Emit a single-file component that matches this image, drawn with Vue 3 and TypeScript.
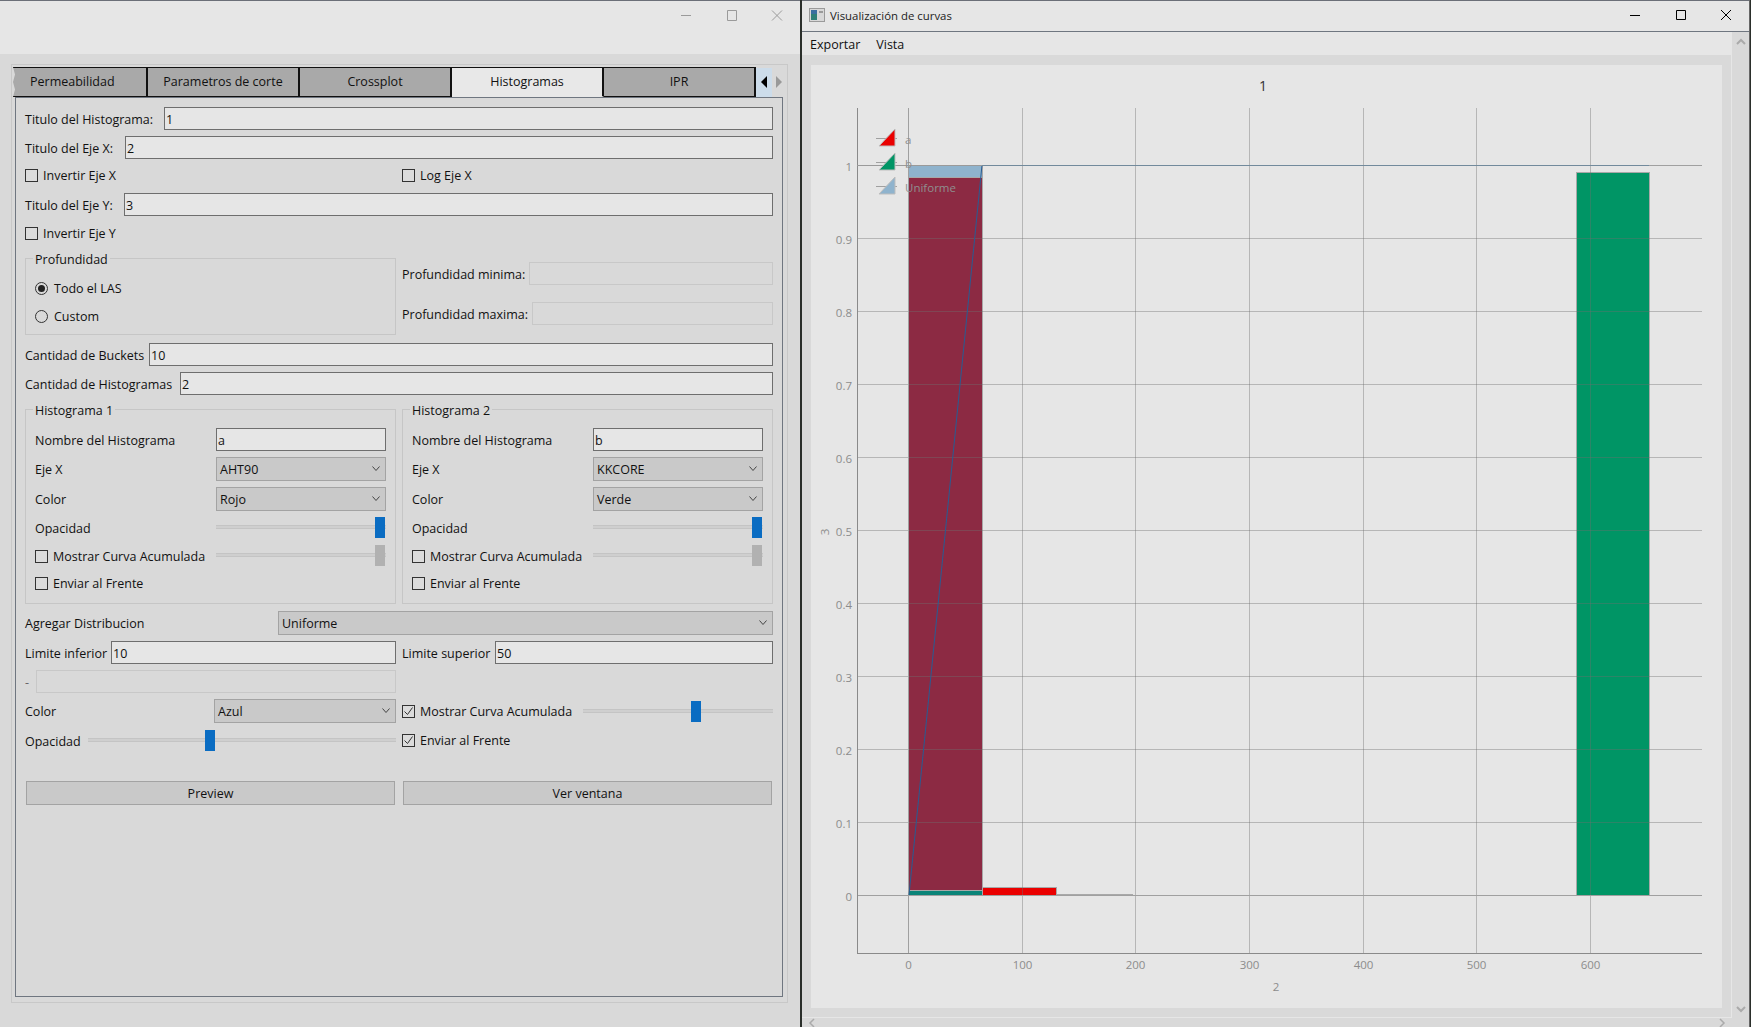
<template>
  <div class="desktop">
    <!-- ventana de configuracion -->
    <section class="win win-left">
      <header class="titlebar titlebar-main">
        <div class="controls inactive">
          <span class="ctl"><svg width="12" height="12" viewBox="0 0 12 12"><path d="M1 6.5h10" /></svg></span>
          <span class="ctl"><svg width="12" height="12" viewBox="0 0 12 12"><path d="M1.5 1.5h9v10h-9z" /></svg></span>
          <span class="ctl"><svg width="12" height="12" viewBox="0 0 12 12"><path d="M1 1.5l10 10M11 1.5L1 11.5" /></svg></span>
        </div>
      </header>

      <div class="tabs-frame">
        <div class="tabbar">
          <div
            v-for="(tab, i) in tabs"
            :key="tab"
            class="tab"
            :class="{ active: tab === 'Histogramas', torn: i === 0 }"
          >{{ tab }}</div>
          <div class="tab-scroll">
            <span class="arrow-box"><i class="tri-left"></i></span>
            <i class="tri-right"></i>
          </div>
        </div>

        <div class="pane">
          <div class="row"><label class="w139">Titulo del Histograma:</label><input class="field" value="1" readonly /></div>
          <div class="row"><label class="w100">Titulo del Eje X:</label><input class="field" value="2" readonly /></div>
          <div class="two-col row-check">
            <div class="check"><i class="box"></i>Invertir Eje X</div>
            <div class="check"><i class="box"></i>Log Eje X</div>
          </div>
          <div class="row"><label class="w99">Titulo del Eje Y:</label><input class="field" value="3" readonly /></div>
          <div class="row"><div class="check"><i class="box"></i>Invertir Eje Y</div></div>

          <div class="two-col">
            <div class="group depth">
              <div class="frame depth-frame">
                <span class="legend">Profundidad</span>
                <div class="radio"><i class="dot on"></i>Todo el LAS</div>
                <div class="radio"><i class="dot"></i>Custom</div>
              </div>
            </div>
            <div class="depth-limits">
              <div class="row"><label class="w127">Profundidad minima:</label><input class="field off" readonly /></div>
              <div class="row"><label class="w130">Profundidad maxima:</label><input class="field off" readonly /></div>
            </div>
          </div>

          <div class="row buckets"><label class="w124">Cantidad de Buckets</label><input class="field" value="10" readonly /></div>
          <div class="row"><label class="w155">Cantidad de Histogramas</label><input class="field" value="2" readonly /></div>

          <div class="two-col">
            <div v-for="h in histograms" :key="h.title" class="group hist">
              <div class="frame hist-frame">
                <span class="legend">{{ h.title }}</span>
                <label>Nombre del Histograma</label>
                <input class="field" :value="h.name" readonly />
                <label>Eje X</label>
                <div class="combo">{{ h.axis }}<svg class="chev" width="10" height="6" viewBox="0 0 10 6"><path d="M1.5 .5l3.5 4 3.5-4" /></svg></div>
                <label>Color</label>
                <div class="combo">{{ h.color }}<svg class="chev" width="10" height="6" viewBox="0 0 10 6"><path d="M1.5 .5l3.5 4 3.5-4" /></svg></div>
                <label>Opacidad</label>
                <div class="slider"><i class="groove"></i><i class="handle" style="left: 159px"></i></div>
                <div class="check"><i class="box"></i>Mostrar Curva Acumulada</div>
                <div class="slider"><i class="groove"></i><i class="handle off" style="left: 159px"></i></div>
                <div class="check"><i class="box"></i>Enviar al Frente</div>
              </div>
            </div>
          </div>

          <div class="row dist">
            <label class="w253">Agregar Distribucion</label>
            <div class="combo grow">Uniforme<svg class="chev" width="10" height="6" viewBox="0 0 10 6"><path d="M1.5 .5l3.5 4 3.5-4" /></svg></div>
          </div>
          <div class="two-col">
            <div class="row"><label class="w86">Limite inferior</label><input class="field" value="10" readonly /></div>
            <div class="row"><label class="w93">Limite superior</label><input class="field" value="50" readonly /></div>
          </div>
          <div class="two-col">
            <div class="row"><label class="w11 dash">-</label><input class="field off" readonly /></div>
          </div>
          <div class="two-col row-24">
            <div class="row row-24">
              <label class="w189">Color</label>
              <div class="combo grow">Azul<svg class="chev" width="10" height="6" viewBox="0 0 10 6"><path d="M1.5 .5l3.5 4 3.5-4" /></svg></div>
            </div>
            <div class="row row-24">
              <div class="check w181"><i class="box"><svg width="11" height="11" viewBox="0 0 11 11"><path d="M1.5 5.5l3 3 5-7" /></svg></i>Mostrar Curva Acumulada</div>
              <div class="slider grow"><i class="groove"></i><i class="handle" style="left: 108px"></i></div>
            </div>
          </div>
          <div class="two-col">
            <div class="row">
              <label class="w63">Opacidad</label>
              <div class="slider grow"><i class="groove"></i><i class="handle" style="left: 117px"></i></div>
            </div>
            <div class="row">
              <div class="check"><i class="box"><svg width="11" height="11" viewBox="0 0 11 11"><path d="M1.5 5.5l3 3 5-7" /></svg></i>Enviar al Frente</div>
            </div>
          </div>
          <div class="actions">
            <div class="btn">Preview</div>
            <div class="btn">Ver ventana</div>
          </div>
        </div>
      </div>
    </section>

    <!-- ventana del grafico -->
    <section class="win win-right">
      <header class="titlebar titlebar-plot">
        <svg class="app-icon" width="16" height="14" viewBox="0 0 16 14">
          <rect x=".5" y=".5" width="15" height="13" fill="#d8d8d8" stroke="#9a9a9a" />
          <rect x="2" y="2" width="6" height="10" fill="#2f7f78" />
          <rect x="2" y="2" width="6" height="4" fill="#3a6fa0" />
          <rect x="10" y="3" width="4" height="2" fill="#9a9a9a" />
        </svg>
        <span class="win-title">Visualización de curvas</span>
        <div class="controls">
          <span class="ctl"><svg width="12" height="12" viewBox="0 0 12 12"><path d="M1 6.5h10" /></svg></span>
          <span class="ctl"><svg width="12" height="12" viewBox="0 0 12 12"><path d="M1.5 1.5h9v9h-9z" /></svg></span>
          <span class="ctl"><svg width="12" height="12" viewBox="0 0 12 12"><path d="M1 1l10 10M11 1L1 11" /></svg></span>
        </div>
      </header>
      <div class="plot-body">
        <div class="plot-main">
          <nav class="menubar"><span>Exportar</span><span>Vista</span></nav>
          <div class="plot-wrap">
            <svg class="chart" width="911" height="943" viewBox="0 0 911 943">
              <!-- barras -->
              <g stroke="#a8a8a8">
                <rect :x="px(0)" y="100.5" width="74" height="12" fill="#8fb3cd" />
                <rect :x="px(0)" y="112.5" width="74" height="713" fill="#8c2a43" />
                <rect :x="px(0)" y="825.5" width="74" height="5" fill="#0a8478" />
                <rect x="171.5" y="822.5" width="74" height="8" fill="#ea0000" />
                <rect x="245.5" y="829.5" width="76" height="1" fill="#a8a8a8" />
                <rect x="765.5" y="107.5" width="73" height="723" fill="#009565" />
              </g>
              <!-- grilla -->
              <g class="grid">
                <line v-for="t in yGrid" :key="'h' + t" x1="46" :y1="py(t)" x2="891" :y2="py(t)" />
                <line v-for="t in xGrid" :key="'v' + t" :x1="px(t)" y1="43" :x2="px(t)" y2="888" />
              </g>
              <line class="axis" :x1="px(0)" y1="43" :x2="px(0)" y2="888" />
              <line class="axis" x1="46" y1="830.5" x2="891" y2="830.5" />
              <line class="axis strong" x1="46.5" y1="43" x2="46.5" y2="888" />
              <line class="axis strong" x1="46" y1="888.5" x2="891" y2="888.5" />
              <!-- uniforme acumulada -->
              <line x1="98" y1="830" x2="171" y2="100" stroke="#285c92" stroke-width="1" />
              <line x1="171" y1="100.5" x2="838" y2="100.5" stroke="#728a9c" stroke-width="1" />
              <line x1="838" y1="100.5" x2="891" y2="100.5" stroke="#a0a0a0" stroke-width="1" />
              <line x1="46" y1="100.5" x2="171" y2="100.5" stroke="#9a9a9a" stroke-width="1" />

              <text class="chart-title" x="452" y="26" text-anchor="middle">1</text>
              <text class="tick" x="465" y="926" text-anchor="middle">2</text>
              <text class="tick" transform="translate(18 467) rotate(-90)" text-anchor="middle">3</text>
              <text v-for="t in yTicks" :key="'yl' + t" class="tick" x="41" :y="py(t) + 5" text-anchor="end">{{ t }}</text>
              <text v-for="t in xTicks" :key="'xl' + t" class="tick" :x="px(t)" y="904" text-anchor="middle">{{ t }}</text>

              <g v-for="l in legendItems" :key="l.name">
                <line x1="65" :y1="l.y + 9.5" x2="86" :y2="l.y + 9.5" stroke="#a0a0a0" />
                <polygon :points="`84,${l.y} 84,${l.y + 17} 68,${l.y + 17}`" :fill="l.color" stroke="#bdbdbd" />
                <text class="legend-text" x="94" :y="l.y + 15">{{ l.name }}</text>
              </g>
            </svg>
          </div>
          <div class="hbar">
            <svg width="8" height="9" viewBox="0 0 8 9"><path d="M6 1L2 5l4 4" /></svg>
            <svg width="8" height="9" viewBox="0 0 8 9"><path d="M2 1l4 4-4 4" /></svg>
          </div>
        </div>
        <div class="vbar">
          <svg width="10" height="7" viewBox="0 0 10 7"><path d="M1 6l4-4 4 4" /></svg>
          <svg width="10" height="7" viewBox="0 0 10 7"><path d="M1 1l4 4 4-4" /></svg>
        </div>
      </div>
    </section>
  </div>
</template>

<script setup lang="ts">
const tabs = ['Permeabilidad', 'Parametros de corte', 'Crossplot', 'Histogramas', 'IPR']

const histograms = [
  { title: 'Histograma 1', name: 'a', axis: 'AHT90', color: 'Rojo' },
  { title: 'Histograma 2', name: 'b', axis: 'KKCORE', color: 'Verde' }
]

const yTicks = [0, 0.1, 0.2, 0.3, 0.4, 0.5, 0.6, 0.7, 0.8, 0.9, 1]
const xTicks = [0, 100, 200, 300, 400, 500, 600]
const yGrid = yTicks.slice(1, -1)
const xGrid = xTicks.slice(1)

const legendItems = [
  { name: 'a', y: 64, color: '#ea0000' },
  { name: 'b', y: 88, color: '#009565' },
  { name: 'Uniforme', y: 112, color: '#8fb3cd' }
]

// escala del grafico en pixeles
const px = (v: number) => Math.round(97 + v * 1.1367) + 0.5
const py = (v: number) => Math.round(830 - v * 730) + 0.5
</script>

<style>
html,
body {
  margin: 0;
  background: #2b2f2b;
}
</style>

<style scoped>
.desktop {
  display: flex;
  width: 1751px;
  height: 1027px;
  overflow: hidden;
  font-family: "Open Sans", sans-serif;
  font-size: 12.5px;
  color: #111;
}

.win {
  display: flex;
  flex-direction: column;
  height: 1027px;
  background: #d9d9d9;
}

.win-left {
  width: 800px;
}

.win-right {
  width: 947px;
  margin-left: 2px;
  border-right: 1px solid #666;
}

/* Title bars */
.titlebar {
  display: flex;
  align-items: flex-start;
  background: #e6e6e6;
  border-top: 1px solid #6b6f78;
  box-sizing: border-box;
}

.titlebar-main {
  height: 54px;
  justify-content: flex-end;
}

.titlebar-plot {
  height: 32px;
  align-items: center;
  border-bottom: 1px solid #6f7680;
  padding: 0 0 2px 7px;
}

.app-icon {
  flex: none;
}

.win-title {
  margin-left: 5px;
  flex: 1;
  font-size: 11.4px;
  color: #222;
}

.controls {
  display: flex;
  fill: none;
  stroke: #000;
}

.controls.inactive {
  stroke: #9a9a9a;
}

.ctl {
  display: flex;
  align-items: center;
  justify-content: center;
  width: 45.5px;
  height: 27px;
}

.titlebar-plot .ctl {
  height: 29px;
}

/* Tabs */
.tabs-frame {
  display: flex;
  flex-direction: column;
  height: 939px;
  margin: 10px 12px 0 11px;
  padding: 2px 4px 5px 3px;
  border: 1px solid #c8c8c8;
  box-sizing: border-box;
}

.tabbar {
  display: flex;
  height: 30px;
  margin-left: -2px;
  position: relative;
  z-index: 1;
}

.tab {
  flex: none;
  display: flex;
  align-items: center;
  justify-content: center;
  width: 152px;
  box-sizing: border-box;
  padding-bottom: 1px;
  background: #a9a9a9;
  border: solid #111;
  border-width: 1px 2px 1px 0;
}

.tab.torn {
  width: 135px;
  justify-content: flex-start;
  padding-left: 17px;
  clip-path: polygon(0 0, 100% 0, 100% 100%, 0 100%, 2px 75%, 0 50%, 2px 25%);
}

.tab.active {
  background: #e8e8e8;
  border-bottom-color: #e8e8e8;
}

.tab-scroll {
  flex: none;
  display: flex;
  align-items: center;
  gap: 4px;
}

.arrow-box {
  display: flex;
  align-items: center;
  justify-content: center;
  width: 16px;
  height: 29px;
  background: #ccdcea;
}

.tri-left {
  border: solid transparent;
  border-width: 6px 6px 6px 0;
  border-right-color: #000;
}

.tri-right {
  margin-top: -1px;
  border: solid transparent;
  border-width: 6px 0 6px 6px;
  border-left-color: #999;
}

.pane {
  flex: 1;
  display: flex;
  flex-direction: column;
  gap: 6px;
  padding: 9px 9px 0;
  border: 1px solid #6f7680;
}

/* Form rows */
.row {
  display: flex;
  align-items: center;
  height: 23px;
  min-width: 0;
}

.row label {
  flex: none;
}

.row label,
.hist-frame label {
  padding-top: 1px;
}

.w11 { width: 11px; }
.w63 { width: 63px; }
.w86 { width: 86px; }
.w93 { width: 93px; }
.w99 { width: 99px; }
.w100 { width: 100px; }
.w124 { width: 124px; }
.w127 { width: 127px; }
.w130 { width: 130px; }
.w139 { width: 139px; }
.w155 { width: 155px; }
.w181 { width: 181px; flex: none; }
.w189 { width: 189px; }
.w253 { width: 253px; }

.row-check {
  height: 22px;
  margin-top: -1px;
  margin-bottom: 1px;
  align-items: center;
}

.row-24 {
  height: 24px;
}

.two-col {
  display: grid;
  grid-template-columns: 371px 371px;
  gap: 6px;
}

.field {
  flex: 1;
  min-width: 0;
  height: 23px;
  box-sizing: border-box;
  padding: 1px 1px 0;
  background: #e6e6e6;
  border: 1px solid #6e6e6e;
  border-radius: 0;
  outline: none;
  font: inherit;
  color: #111;
}

.field.off {
  background: #d9d9d9;
  border-color: #c8c8c8;
}

.combo {
  position: relative;
  display: flex;
  align-items: center;
  height: 24px;
  box-sizing: border-box;
  padding-left: 3px;
  background: #c9c9c9;
  border: 1px solid #a3a3a3;
}

.grow {
  flex: 1;
}

.chev {
  position: absolute;
  right: 4px;
  top: 8px;
  fill: none;
  stroke: #444;
}

.check,
.radio {
  display: flex;
  align-items: center;
  white-space: nowrap;
}

.box {
  display: flex;
  flex: none;
  width: 13px;
  height: 13px;
  box-sizing: border-box;
  margin-right: 5px;
  border: 1px solid #333;
  background: #dcdcdc;
}

.box svg {
  fill: none;
  stroke: #333;
}

.dot {
  position: relative;
  flex: none;
  width: 13px;
  height: 13px;
  box-sizing: border-box;
  margin-right: 6px;
  border: 1px solid #333;
  border-radius: 50%;
}

.dot.on::after {
  content: "";
  position: absolute;
  inset: 2px;
  border-radius: 50%;
  background: #222;
}

/* Group boxes */
.group {
  padding-top: 7px;
}

.group.hist {
  padding-top: 8px;
}

.frame {
  position: relative;
  box-sizing: border-box;
  border: 1px solid #c6c6c6;
}

.legend {
  position: absolute;
  top: -8px;
  left: 7px;
  padding: 0 2px;
  background: #d9d9d9;
}

.depth-frame {
  display: flex;
  flex-direction: column;
  gap: 12px;
  height: 77px;
  padding: 21px 9px 0;
}

.radio {
  height: 16px;
}

.depth-limits {
  display: flex;
  flex-direction: column;
  gap: 17px;
  padding-top: 11px;
}

.buckets {
  margin-top: 2px;
}

.hist-frame {
  display: grid;
  grid-template-columns: 181px 170px;
  grid-template-rows: 23px 24px 24px 22px 22px 21px;
  row-gap: 6px;
  align-items: center;
  height: 195px;
  padding: 18px 0 0 9px;
}

/* Sliders */
.slider {
  position: relative;
  height: 21px;
  align-self: start;
}

.row .slider {
  align-self: center;
}

.groove {
  position: absolute;
  left: 0;
  right: 0;
  top: 8px;
  height: 2px;
  background: #cfcfcf;
  border: solid #c4c4c4;
  border-width: 1px 0;
}

.handle {
  position: absolute;
  top: 0;
  width: 10px;
  height: 21px;
  background: #0a6cc2;
}

.handle.off {
  background: #b1b1b1;
}

.dist {
  margin-top: 1px;
  height: 24px;
}

.dash {
  color: #666;
}

.actions {
  display: grid;
  grid-template-columns: 369px 369px;
  gap: 8px;
  margin: 23px 1px 0;
}

.btn {
  display: flex;
  align-items: center;
  justify-content: center;
  height: 24px;
  box-sizing: border-box;
  background: #c9c9c9;
  border: 1px solid #a3a3a3;
}

/* Plot window */
.plot-body {
  flex: 1;
  display: flex;
  min-height: 0;
}

.plot-main {
  display: flex;
  flex-direction: column;
  width: 930px;
}

.menubar {
  display: flex;
  gap: 16px;
  align-items: center;
  height: 23px;
  box-sizing: border-box;
  padding: 2px 0 0 8px;
  background: #e6e6e6;
}

.plot-wrap {
  flex: 1;
  min-height: 0;
  padding: 10px 9px 9px;
  border-right: 1px solid #e6e6e6;
  border-bottom: 1px solid #e6e6e6;
}

.chart {
  display: block;
  background: #e6e6e6;
}

.grid line {
  stroke: rgba(110, 110, 110, 0.4);
}

.axis {
  stroke: #a0a0a0;
}

.axis.strong {
  stroke: #8a8a8a;
}

.chart text {
  font-family: "Open Sans", sans-serif;
}

.chart-title {
  font-size: 14px;
  fill: #333;
}

.tick {
  font-size: 11.5px;
  fill: #8c8c8c;
}

.legend-text {
  font-size: 11.5px;
  fill: #8f8f8f;
}

.hbar {
  display: flex;
  justify-content: space-between;
  align-items: flex-end;
  height: 9px;
  padding: 0 6px;
  fill: none;
  stroke: #aaa;
  stroke-width: 1.5;
}

.vbar {
  flex: 1;
  display: flex;
  flex-direction: column;
  justify-content: space-between;
  align-items: center;
  padding: 6px 0 14px;
  fill: none;
  stroke: #aaa;
  stroke-width: 2;
}
</style>
